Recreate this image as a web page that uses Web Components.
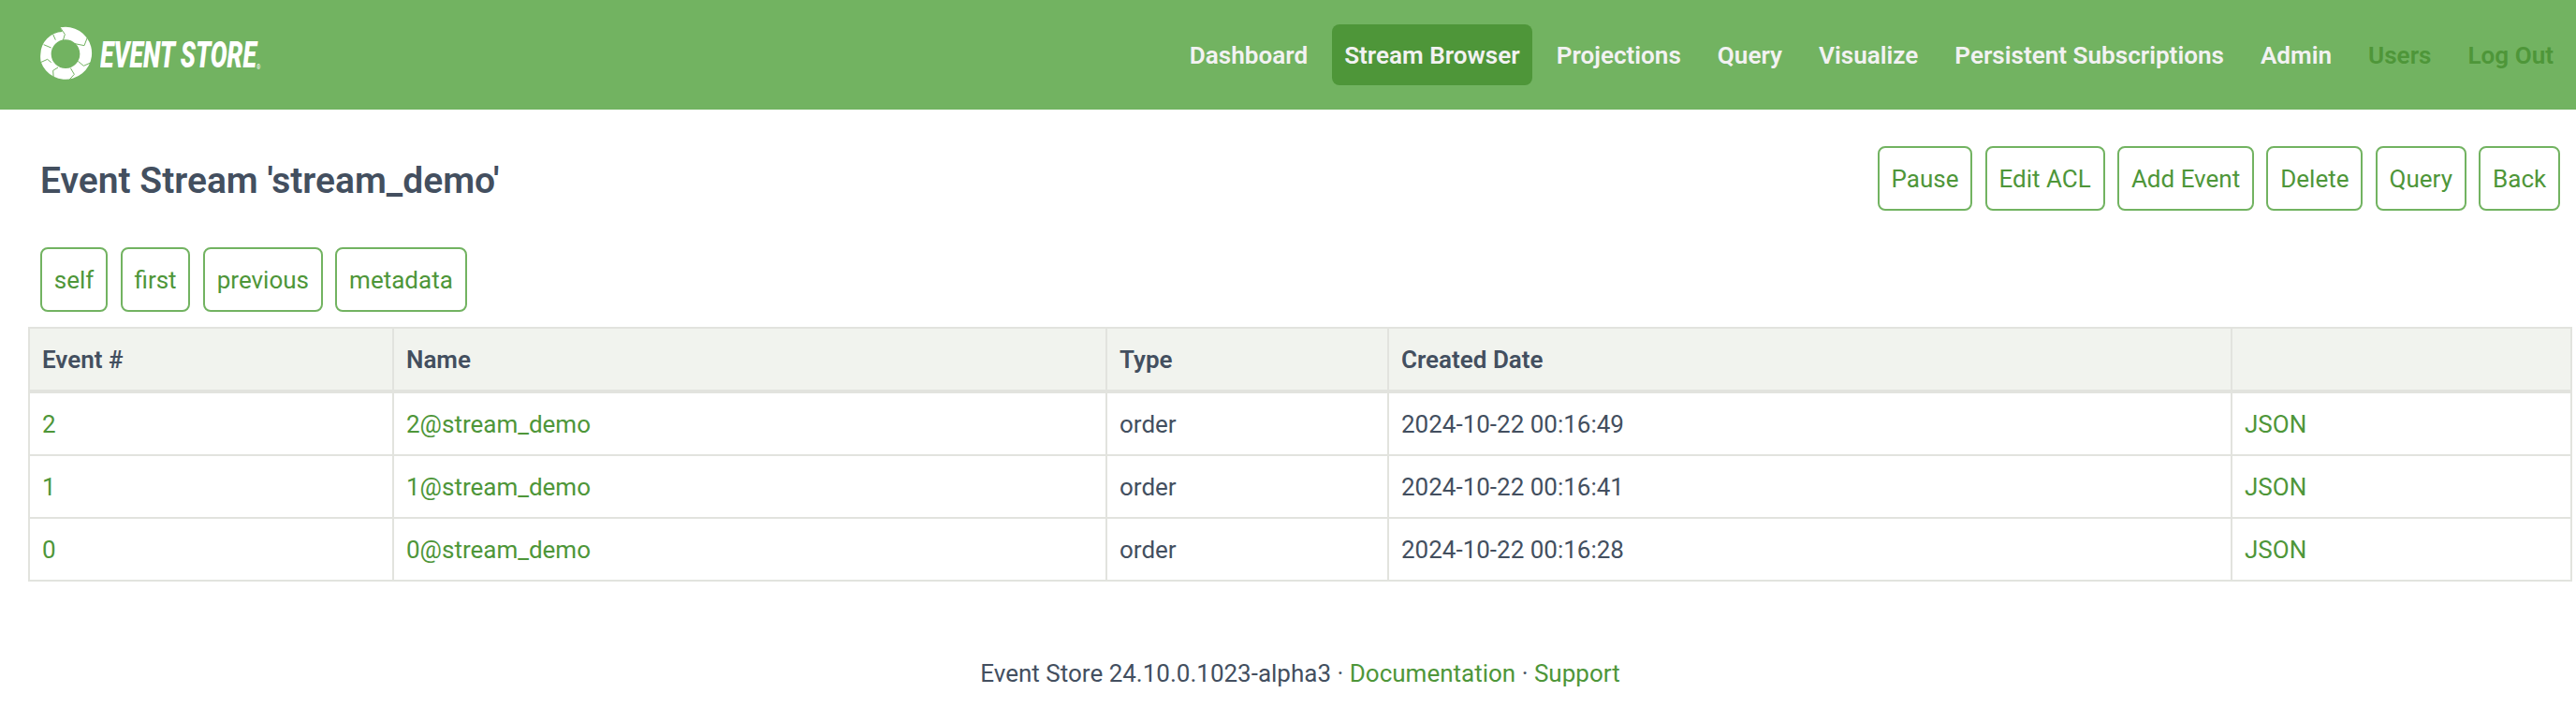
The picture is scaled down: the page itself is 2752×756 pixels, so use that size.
<!DOCTYPE html>
<html>
<head>
<meta charset="utf-8">
<style>
  html, body { margin: 0; background: #fff; }
  body { font-family: Roboto, "Liberation Sans", sans-serif; font-size: 26px; color: #434f5f; overflow: hidden; }
  es-toolbar { margin-top: 39px; }
  es-links { margin: 39px 0 0 43px; }
</style>
</head>
<body>
<es-header>
  <es-nav-item>Dashboard</es-nav-item>
  <es-nav-item active>Stream Browser</es-nav-item>
  <es-nav-item>Projections</es-nav-item>
  <es-nav-item>Query</es-nav-item>
  <es-nav-item>Visualize</es-nav-item>
  <es-nav-item>Persistent Subscriptions</es-nav-item>
  <es-nav-item>Admin</es-nav-item>
  <es-nav-item dim>Users</es-nav-item>
  <es-nav-item dim>Log Out</es-nav-item>
</es-header>
<es-toolbar title="Event Stream 'stream_demo'">
  <es-button>Pause</es-button>
  <es-button>Edit ACL</es-button>
  <es-button>Add Event</es-button>
  <es-button>Delete</es-button>
  <es-button>Query</es-button>
  <es-button>Back</es-button>
</es-toolbar>
<es-links>
  <es-button>self</es-button>
  <es-button>first</es-button>
  <es-button>previous</es-button>
  <es-button>metadata</es-button>
</es-links>
<es-events></es-events>
<es-footer></es-footer>

<script>
class EsHeader extends HTMLElement {
  constructor() {
    super();
    this.attachShadow({ mode: "open" });
    this.shadowRoot.innerHTML = /*html*/ `
      <style>
        :host {
          display: flex;
          align-items: center;
          justify-content: space-between;
          height: 117px;
          padding: 0 11px 0 41px;
          background: #72b361;
        }
        .logo { display: flex; align-items: center; margin-top: -1px; }
        svg { display: block; width: 60px; height: 60px; }
        .name {
          display: block;
          width: 169px;
          margin: 2px 0 0 6px;
          font: italic 900 38px/1 Roboto, sans-serif;
          color: #fff;
          white-space: nowrap;
          transform: scaleX(.7);
          transform-origin: left center;
        }
        .name sup { font-size: 8px; font-weight: 400; font-style: normal; vertical-align: -2px; }
        nav { display: flex; gap: 13px; margin-top: -1px; }
      </style>
      <div class="logo">
        <svg viewBox="33 36 180 180" aria-hidden="true">
          <path fill="#fff" fill-rule="evenodd" d="M103 40 A84 84 0 1 1 41 150 A80 80 0 0 1 40 125 A72 72 0 0 1 110 54 L103 40Z M119 79 A46 46 0 1 0 121 171 A46 46 0 1 0 119 79Z"/>
          <g fill="none" stroke="#72b361" stroke-width="3">
            <path d="M103 40 L118 62 L112 82"/>
            <path d="M80 62 L88 80"/>
            <path d="M50 95 L74 105"/>
            <path d="M40 152 L62 142 L74 152"/>
            <path d="M96 168 L80 178 L82 206"/>
            <path d="M130 210 L148 190 L136 170"/>
            <path d="M160 148 L178 163 L207 150"/>
            <path d="M150 92 L180 98 L190 72"/>
          </g>
        </svg>
        <span class="name">EVENT STORE<sup>®</sup></span>
      </div>
      <nav><slot></slot></nav>
    `;
  }
}
customElements.define("es-header", EsHeader);

class EsNavItem extends HTMLElement {
  constructor() {
    super();
    this.attachShadow({ mode: "open" });
    this.shadowRoot.innerHTML = /*html*/ `
      <style>
        :host {
          display: block;
          padding: 1px 13px 0;
          font-size: 26.1px;
          font-weight: 600;
          line-height: 64px;
          color: #f2f2f2;
          border-radius: 8px;
          white-space: nowrap;
        }
        :host([active]) { background: #4e9639; }
        :host([dim]) { color: #4e9639; }
      </style>
      <slot></slot>
    `;
  }
}
customElements.define("es-nav-item", EsNavItem);

class EsButton extends HTMLElement {
  constructor() {
    super();
    this.attachShadow({ mode: "open" });
    this.shadowRoot.innerHTML = /*html*/ `
      <style>
        :host {
          display: block;
          padding: 1px 12.8px 0;
          border: 2px solid #72b361;
          border-radius: 8px;
          font-size: 26px;
          line-height: 64px;
          color: #4e9639;
          white-space: nowrap;
        }
      </style>
      <slot></slot>
    `;
  }
}
customElements.define("es-button", EsButton);

class EsToolbar extends HTMLElement {
  constructor() {
    super();
    this.attachShadow({ mode: "open" });
    this.shadowRoot.innerHTML = /*html*/ `
      <style>
        :host {
          display: flex;
          align-items: center;
          justify-content: space-between;
          padding: 0 17px 0 43px;
        }
        h1 { margin: 4px 0 0; font-size: 39px; font-weight: 600; color: #434f5f; }
        div { display: flex; gap: 13.5px; }
      </style>
      <h1></h1>
      <div><slot></slot></div>
    `;
    this.shadowRoot.querySelector("h1").textContent = this.getAttribute("title");
  }
}
customElements.define("es-toolbar", EsToolbar);

class EsLinks extends HTMLElement {
  constructor() {
    super();
    this.attachShadow({ mode: "open" });
    this.shadowRoot.innerHTML = /*html*/ `
      <style>
        :host { display: flex; gap: 13.5px; }
      </style>
      <slot></slot>
    `;
  }
}
customElements.define("es-links", EsLinks);

class EsEvents extends HTMLElement {
  constructor() {
    super();
    this.attachShadow({ mode: "open" });
    const rows = [
      ["2", "2@stream_demo", "order", "2024-10-22 00:16:49"],
      ["1", "1@stream_demo", "order", "2024-10-22 00:16:41"],
      ["0", "0@stream_demo", "order", "2024-10-22 00:16:28"],
    ];
    this.shadowRoot.innerHTML = /*html*/ `
      <style>
        :host { display: block; margin: 16px 4px 0 30px; }
        table { width: 2718px; table-layout: fixed; border-collapse: collapse; font-size: 26px; }
        th, td { border: 2px solid #e2e3de; padding: 0 13px; height: 65px; text-align: left; }
        th { background: #f1f3ee; font-weight: 600; border-bottom-width: 4px; color: #434f5f; }
        td { color: #434f5f; }
        a { color: #4e9639; text-decoration: none; }
      </style>
      <table>
        <colgroup>
          <col style="width: 389px"><col style="width: 762px"><col style="width: 301px"><col style="width: 901px"><col>
        </colgroup>
        <thead>
          <tr><th>Event #</th><th>Name</th><th>Type</th><th>Created Date</th><th></th></tr>
        </thead>
        <tbody>
          ${rows.map(r => `
          <tr>
            <td><a href="#">${r[0]}</a></td>
            <td><a href="#">${r[1]}</a></td>
            <td>${r[2]}</td>
            <td>${r[3]}</td>
            <td><a href="#">JSON</a></td>
          </tr>`).join("")}
        </tbody>
      </table>
    `;
  }
}
customElements.define("es-events", EsEvents);

class EsFooter extends HTMLElement {
  constructor() {
    super();
    this.attachShadow({ mode: "open" });
    this.shadowRoot.innerHTML = /*html*/ `
      <style>
        :host { display: block; margin-top: 83px; padding-left: 26px; text-align: center; font-size: 26px; color: #434f5f; }
        a { color: #4e9639; text-decoration: none; }
      </style>
      Event Store 24.10.0.1023-alpha3 · <a href="#">Documentation</a> · <a href="#">Support</a>
    `;
  }
}
customElements.define("es-footer", EsFooter);
</script>
</body>
</html>
